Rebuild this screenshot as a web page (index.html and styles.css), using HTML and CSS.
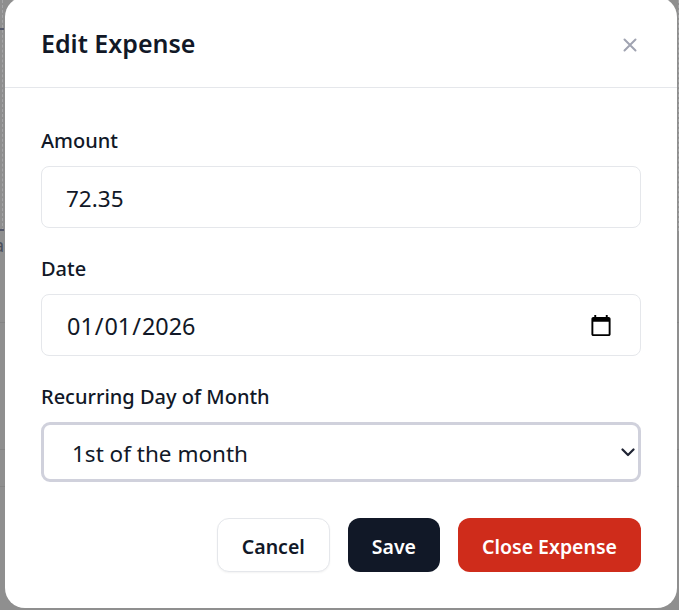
FILE: index.html
```html
<!DOCTYPE html>
<html lang="en">
<head>
    <meta charset="UTF-8">
    <meta name="viewport" content="width=device-width, initial-scale=1.0">
    <title>Edit Expense</title>
    <link rel="stylesheet" href="styles.css">
</head>
<body>

<!-- Dimmed page behind the dialog, only its edges show -->
<div class="page">
    <div class="dashed-box">
        <div class="tick"></div>
        <div class="tick tick-bottom"></div>
    </div>
    <div class="cut-text">a</div>
    <div class="row row-first"></div>
    <div class="row row-second"></div>
    <div class="row row-third"></div>
</div>

<div class="overlay">
    <div class="modal">
        <div class="modal-header">
            <h2>Edit Expense</h2>
            <button class="close-btn" aria-label="Close">
                <svg width="24" height="24" viewBox="0 0 24 24" fill="none" stroke="currentColor" stroke-width="2" stroke-linecap="round">
                    <path d="M6.5 6.5l11 11M17.5 6.5l-11 11"/>
                </svg>
            </button>
        </div>

        <div class="modal-body">
            <div class="form-group">
                <label for="amount">Amount</label>
                <input type="text" id="amount" value="72.35">
            </div>
            <div class="form-group">
                <label for="date">Date</label>
                <input type="date" id="date" value="2026-01-01">
            </div>
            <div class="form-group">
                <label for="day">Recurring Day of Month</label>
                <div class="select-wrap">
                    <select id="day">
                        <option>1st of the month</option>
                        <option>2nd of the month</option>
                        <option>3rd of the month</option>
                    </select>
                    <svg class="chevron" width="14" height="9" viewBox="0 0 14 9" fill="none" stroke="currentColor" stroke-width="2.2" stroke-linecap="round" stroke-linejoin="round">
                        <path d="M1.5 1.5L7 7l5.5-5.5"/>
                    </svg>
                </div>
            </div>

            <div class="modal-actions">
                <button class="btn btn-cancel">Cancel</button>
                <button class="btn btn-save">Save</button>
                <button class="btn btn-close">Close Expense</button>
            </div>
        </div>
    </div>
</div>

</body>
</html>
```

FILE: styles.css
```css
* {
    margin: 0;
    padding: 0;
    box-sizing: border-box;
}

body {
    font-family: 'Noto Sans', sans-serif;
    background-color: #8f8f8f;
    color: #111827;
    height: 100vh;
    overflow: hidden;
}

/* Page behind the dialog */
.dashed-box {
    height: 231px;
    margin-left: 2px;
    padding-top: 28px;
    border-left: 1px dashed #a6a6a8;
    border-right: 1px dashed #a6a6a8;
}

.tick {
    width: 4px;
    height: 2px;
    margin-left: -3px;
    background-color: #55596b;
}

.tick-bottom {
    margin-top: 199px;
}

.cut-text {
    font-size: 18px;
    line-height: 28px;
    margin-left: -6px;
    color: #4b4f5c;
}

.row {
    border-bottom: 1px solid #858585;
}

.row-first {
    height: 64px;
}

.row-second {
    height: 127px;
}

.row-third {
    height: 37px;
}

/* Dialog */
.overlay {
    position: fixed;
    top: 0;
    left: 0;
    width: 100%;
    height: 100%;
}

.modal {
    background-color: white;
    border-radius: 20px;
    width: 672px;
    height: 611px;
    margin: -3px 0 0 5px;
}

.modal-header {
    display: flex;
    justify-content: space-between;
    align-items: center;
    height: 91px;
    padding: 1px 35px 0 36px;
    border-bottom: 1px solid #e5e7eb;
}

.modal-header h2 {
    font-size: 25px;
    font-weight: 600;
}

.close-btn {
    background: none;
    border: none;
    color: #a0a3b1;
    display: flex;
    margin-top: 4px;
}

.modal-body {
    padding: 36px 36px 0;
}

/* Form */
.form-group {
    margin-bottom: 24px;
}

.form-group label {
    display: block;
    font-size: 20px;
    font-weight: 500;
    line-height: 34px;
    margin-bottom: 8px;
}

.form-group input {
    display: block;
    width: 100%;
    height: 62px;
    padding: 2px 24px 0;
    font-family: inherit;
    font-size: 22.5px;
    color: #111827;
    border: 1px solid #e5e7eb;
    border-radius: 8px;
    outline: none;
}

.form-group input[type="date"] {
    font-size: 23.4px;
}

.form-group input::-webkit-calendar-picker-indicator {
    width: 24px;
    height: 24px;
    padding: 0;
    margin-right: 3px;
}

.select-wrap {
    position: relative;
}

.form-group select {
    display: block;
    width: 100%;
    height: 60px;
    padding: 2px 28px 0;
    font-family: inherit;
    font-size: 22.5px;
    color: #111827;
    background-color: white;
    border: 3px solid #d0d1dc;
    border-radius: 9px;
    appearance: none;
}

.chevron {
    position: absolute;
    top: 26px;
    right: 6px;
    color: #1f2333;
}

/* Footer buttons */
.modal-actions {
    display: flex;
    justify-content: flex-end;
    gap: 18px;
    margin-top: 36px;
}

.btn {
    height: 54px;
    padding: 2px 24px 0;
    font-family: inherit;
    font-size: 19.5px;
    font-weight: 600;
    border: none;
    border-radius: 12px;
}

.btn-cancel {
    background-color: white;
    color: #111827;
    border: 1px solid #e5e7eb;
    box-shadow: 0 1px 2px rgba(0, 0, 0, 0.05);
}

.btn-save {
    background-color: #111827;
    color: white;
}

.btn-close {
    background-color: #cf2c1b;
    color: white;
}
```
